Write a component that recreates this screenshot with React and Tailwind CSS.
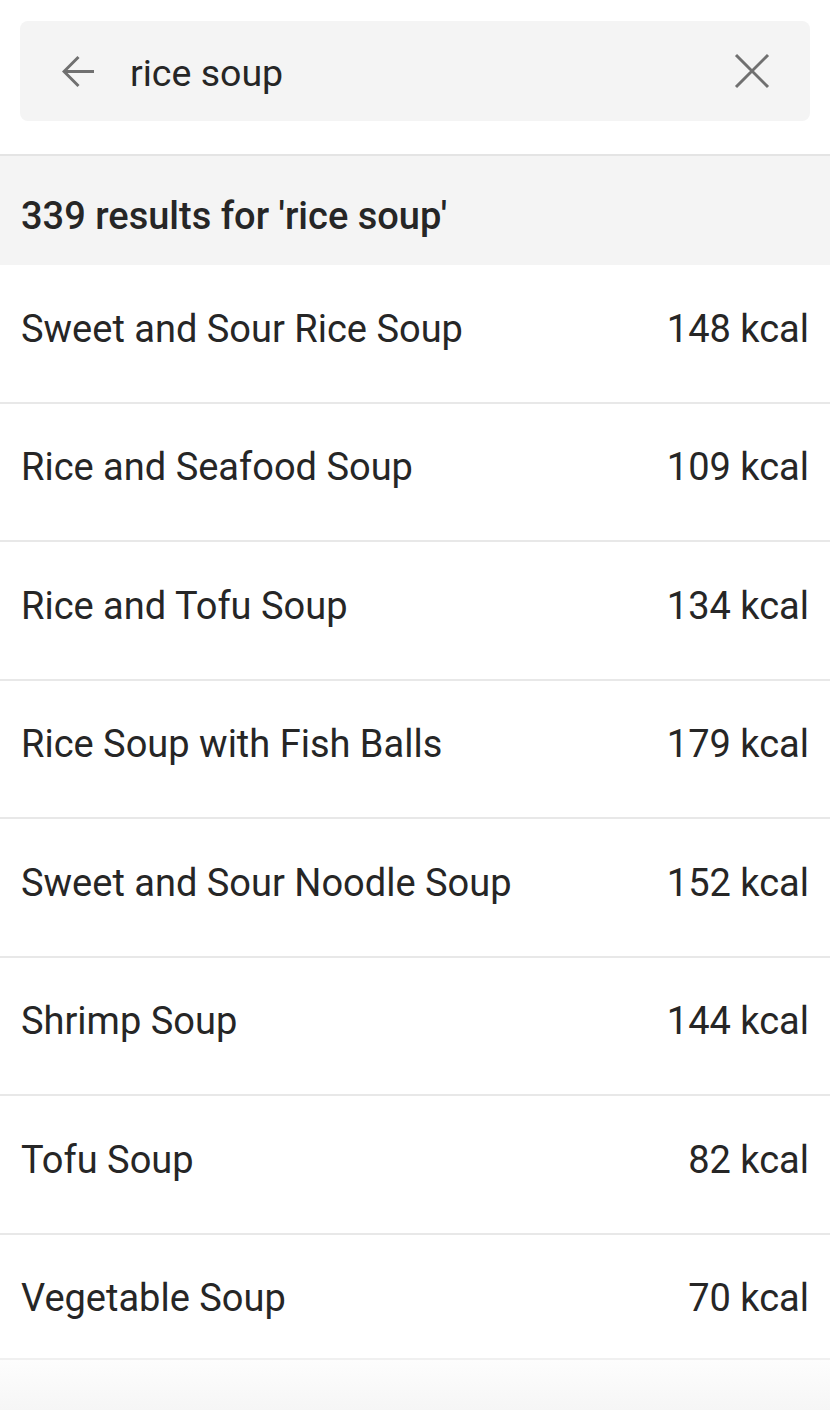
const results = [
  { name: "Sweet and Sour Rice Soup", kcal: 148 },
  { name: "Rice and Seafood Soup", kcal: 109 },
  { name: "Rice and Tofu Soup", kcal: 134 },
  { name: "Rice Soup with Fish Balls", kcal: 179 },
  { name: "Sweet and Sour Noodle Soup", kcal: 152 },
  { name: "Shrimp Soup", kcal: 144 },
  { name: "Tofu Soup", kcal: 82 },
  { name: "Vegetable Soup", kcal: 70 },
];

function SearchBar() {
  return (
    <div className="px-5 pt-[21px] pb-[33px] bg-white shrink-0">
      <div className="flex items-center h-[100px] bg-[#f4f4f4] rounded-lg pl-[42px] pr-[40px]">
        <svg width="33" height="33" viewBox="0 0 33 33" fill="none" stroke="#707070" strokeWidth="3">
          <path d="M32 16.5H3" />
          <path d="M16.5 2L2 16.5L16.5 31" />
        </svg>
        <span className="ml-[35px] text-[37.5px] text-[#262626] flex-1 leading-none pt-[5px]">rice soup</span>
        <svg width="36" height="36" viewBox="0 0 36 36" fill="none" stroke="#707070" strokeWidth="3">
          <path d="M2 2L34 34" />
          <path d="M34 2L2 34" />
        </svg>
      </div>
    </div>
  );
}

export default function App() {
  return (
    <div className="w-[830px] h-[1410px] overflow-hidden bg-white font-['Roboto',sans-serif] text-[#262626] flex flex-col">
      <SearchBar />
      <div className="h-[111px] shrink-0 bg-[#f4f4f4] border-t-2 border-[#e4e4e4] flex items-center px-[21px] pt-[12px]">
        <span className="text-[38px] font-medium">339 results for 'rice soup'</span>
      </div>
      <div className="h-[1093px] shrink-0 overflow-hidden flex flex-col">
        {results.map((r) => (
          <div
            key={r.name}
            className="h-[138.5px] flex items-center justify-between px-[21px] pb-[8px] border-b-2 border-[#e8e8e8] shrink-0"
          >
            <span className="text-[38px]">{r.name}</span>
            <span className="text-[38px]">{r.kcal} kcal</span>
          </div>
        ))}
      </div>
      <div className="flex-1 bg-gradient-to-b from-[#fdfdfd] to-[#f6f6f6] border-t-2 border-[#f0f0f0]" />
    </div>
  );
}
